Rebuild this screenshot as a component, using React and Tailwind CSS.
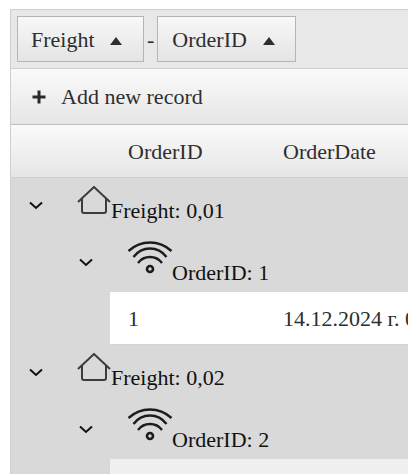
import React from "react";

const Arrow = ({ gap }) => (
  <svg width="12" height="8" viewBox="0 0 12 8" className={`mt-[4px] ${gap}`}>
    <path d="M6 0 L12 8 H0 Z" fill="#2e2e2e" />
  </svg>
);

const Chevron = () => (
  <svg width="14" height="9" viewBox="0 0 14 9" fill="none" stroke="#111" strokeWidth="2">
    <path d="M1 1.5 L7 7 L13 1.5" />
  </svg>
);

const Plus = () => (
  <svg width="14" height="14" viewBox="0 0 14 14" fill="#2a2a2a" className="mr-[15px]">
    <path d="M5.500 0.500 H8.500 V5.500 H13.500 V8.500 H8.500 V13.500 H5.500 V8.500 H0.500 V5.500 H5.500 Z" />
  </svg>
);

const House = () => (
  <svg width="34" height="30" viewBox="0 0 34 30" fill="none" stroke="#3c3c3c" strokeWidth="2" className="shrink-0">
    <path d="M1 16 L17 1 L33 16" />
    <path d="M5 13 V25 Q5 27 7 27 H27 Q29 27 29 25 V13" />
  </svg>
);

const Wifi = () => (
  <svg width="46" height="34" viewBox="0 0 46 34" fill="none" stroke="#1c1c1c" strokeWidth="2.4" className="shrink-0">
    <path d="M1.500 10 C14 -1.300 32 -1.300 44.500 10" />
    <path d="M6.500 16 C15 4.700 31 4.700 39.500 16" />
    <path d="M11 22 C17 14 29 14 35 22" />
    <circle cx="23" cy="28" r="3" strokeWidth="2.600" />
  </svg>
);

const SortChip = ({ label, width, pad, gap }) => (
  <div
    className={`flex h-[46px] items-center border border-[#b5b5b5] bg-gradient-to-b from-[#f8f8f8] to-[#e4e4e4] ${width} ${pad}`}
  >
    <span>{label}</span>
    <Arrow gap={gap} />
  </div>
);

const GroupRow = ({ label, indent, chevronLeft, icon, textTop }) => (
  <div className="flex h-[57px]">
    <div className={`pt-[23px] ${chevronLeft}`}>
      <Chevron />
    </div>
    <div className={`flex items-start ${indent}`}>
      {icon}
      <span className={`text-[#111] ${textTop}`}>{label}</span>
    </div>
  </div>
);

const Group = ({ freight, order, value, date, rowBg }) => (
  <div>
    <GroupRow
      label={`Freight: ${freight}`}
      chevronLeft="pl-[18px]"
      indent="pl-[34px] pt-[8px]"
      icon={<House />}
      textTop="pt-[8px]"
    />
    <GroupRow
      label={`OrderID: ${order}`}
      chevronLeft="pl-[68px]"
      indent="pl-[34px] pt-[6px]"
      icon={<Wifi />}
      textTop="-ml-px pt-[15px]"
    />
    <div className={`ml-[99px] flex h-[53px] items-center border-b border-[#d4d4d4] ${rowBg}`}>
      <div className="w-[173px] shrink-0 pl-[18px] text-[#2e2e2e]">{value}</div>
      <div className="whitespace-nowrap text-[#2e2e2e]">{date}</div>
    </div>
  </div>
);

export default function App() {
  return (
    <div className="h-[474px] w-[408px] overflow-hidden bg-white pl-[10px] pt-[9px] font-['Liberation_Serif',serif] text-[22px]">
      <div className="w-[398px] border-l border-t border-[#cfcfcf] text-[#2e2e2e]">
        {/* group header */}
        <div className="flex h-[59px] items-center gap-[3px] border-b border-[#cfcfcf] bg-[#e8e8e8] pl-[6px]">
          <SortChip label="Freight" width="w-[127px]" pad="pl-[13px]" gap="ml-[15px]" />
          <span>-</span>
          <SortChip label="OrderID" width="w-[139px]" pad="pl-[14px]" gap="ml-[16px]" />
        </div>

        {/* toolbar */}
        <div className="flex h-[56px] items-center border-b border-[#bdbdbd] bg-gradient-to-b from-[#fafafa] to-[#e6e6e6] pl-[21px]">
          <Plus />
          <span>Add new record</span>
        </div>

        {/* column header */}
        <div className="flex h-[53px] items-center border-b border-[#cfcfcf] bg-gradient-to-b from-[#fafafa] to-[#e6e6e6]">
          <div className="w-[272px] shrink-0 pl-[117px]">OrderID</div>
          <div>OrderDate</div>
        </div>

        {/* grouped rows */}
        <div className="bg-[#d9d9d9]">
          <Group freight="0,01" order="1" value="1" date="14.12.2024 г. 0:00:00" rowBg="bg-white" />
          <Group freight="0,02" order="2" value="" date="" rowBg="bg-[#f0f0f0]" />
        </div>
      </div>
    </div>
  );
}
